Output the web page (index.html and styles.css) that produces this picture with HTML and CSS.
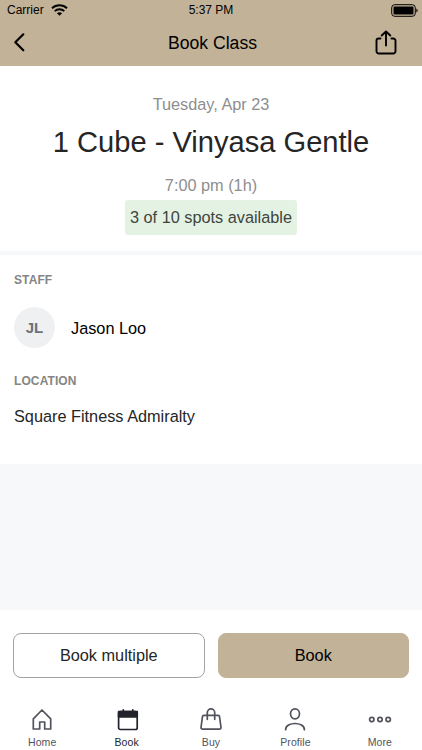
FILE: index.html
```html
<!DOCTYPE html>
<html lang="en">
<head>
    <meta charset="UTF-8">
    <meta name="viewport" content="width=device-width, initial-scale=1.0">
    <title>Book Class</title>
    <link rel="stylesheet" href="styles.css">
</head>
<body>
    <header>
        <div class="status-bar">
            <div class="carrier">
                <span>Carrier</span>
                <svg width="17" height="12" viewBox="0 0 17 12" fill="none" stroke="#000" stroke-width="1.9">
                    <path d="M1 4.3C5.2.3 11.8.3 16 4.3"/>
                    <path d="M3.7 7.1c2.7-2.5 6.9-2.5 9.6 0"/>
                    <path d="M8.5 11.8L5.9 9.2c1.5-1.3 3.7-1.3 5.2 0z" fill="#000" stroke="none"/>
                </svg>
            </div>
            <span class="time">5:37 PM</span>
            <svg class="battery" width="27" height="13" viewBox="0 0 27 13">
                <rect x=".7" y=".7" width="23.6" height="11.6" rx="3" fill="none" stroke="#000" stroke-width="1"/>
                <rect x="2.5" y="2.5" width="20" height="8" rx="1"/>
                <path d="M25.4 4.5c1.6.7 1.6 3.3 0 4z"/>
            </svg>
        </div>
        <div class="nav-bar">
            <svg width="28" height="26" viewBox="0 0 28 26" fill="none" stroke="#000" stroke-width="2.2" stroke-linecap="round" stroke-linejoin="round">
                <path d="M9.300 4.300L1.300 12.300 9.300 20.300"/>
            </svg>
            <h1>Book Class</h1>
            <svg width="28" height="26" viewBox="0 0 28 26" fill="none" stroke="#000" stroke-width="1.9" stroke-linecap="round" stroke-linejoin="round">
                <path d="M8.500 8.500H6.800a2.300 2.300 0 0 0-2.300 2.300v10.400a2.300 2.300 0 0 0 2.300 2.300h14.400a2.300 2.300 0 0 0 2.300-2.300V10.800a2.300 2.300 0 0 0-2.300-2.300h-1.700"/>
                <path d="M14 15.500V1.500M9.700 5.500L14 1.500l4.300 4"/>
            </svg>
        </div>
    </header>

    <section class="summary">
        <p class="date">Tuesday, Apr 23</p>
        <h2>1 Cube - Vinyasa Gentle</h2>
        <p class="hours">7:00 pm (1h)</p>
        <span class="spots">3 of 10 spots available</span>
    </section>

    <section class="details">
        <h3>STAFF</h3>
        <div class="staff">
            <span class="avatar">JL</span>
            <span class="staff-name">Jason Loo</span>
        </div>
        <h3>LOCATION</h3>
        <p class="location">Square Fitness Admiralty</p>
    </section>

    <div class="actions">
        <button class="btn">Book multiple</button>
        <button class="btn btn-primary">Book</button>
    </div>

    <nav class="tabs">
        <a class="tab">
            <svg width="24" height="24" viewBox="0 0 24 24">
                <path d="M3.300 10.800L12 2l8.700 8.800V21H14.700v-7H9.700v7H3.300z"/>
            </svg>
            <span>Home</span>
        </a>
        <a class="tab active">
            <svg width="24" height="24" viewBox="0 0 24 24">
                <rect x="3.600" y="3.500" width="18.600" height="18" rx="1.800"/>
                <path d="M3.600 3.500h18.600v5.300H3.600z" fill="currentColor"/>
                <path d="M8.300 1.800v2M17.800 1.800v2"/>
            </svg>
            <span>Book</span>
        </a>
        <a class="tab">
            <svg width="24" height="24" viewBox="0 0 24 24">
                <path d="M5 7.300h14a1.500 1.500 0 0 1 1.500 1.200l1.500 11a1.600 1.600 0 0 1-1.600 1.700H3.600A1.600 1.600 0 0 1 2 19.500l1.500-11A1.500 1.500 0 0 1 5 7.300z"/>
                <path d="M8.300 11.300V4.600a3.700 3.700 0 0 1 7.400 0v6.700"/>
            </svg>
            <span>Buy</span>
        </a>
        <a class="tab">
            <svg width="24" height="24" viewBox="0 0 24 24">
                <ellipse cx="12" cy="5.800" rx="4.500" ry="5"/>
                <path d="M2.600 21.700c0-8.300 18.800-8.300 18.800 0"/>
            </svg>
            <span>Profile</span>
        </a>
        <a class="tab">
            <svg width="24" height="24" viewBox="0 0 24 24">
                <circle cx="3.800" cy="11.500" r="2.200"/>
                <circle cx="12" cy="11.500" r="2.200"/>
                <circle cx="20.200" cy="11.500" r="2.200"/>
            </svg>
            <span>More</span>
        </a>
    </nav>
</body>
</html>
```

FILE: styles.css
```css
* {
    box-sizing: border-box;
}

body {
    display: flex;
    flex-direction: column;
    height: 750px;
    margin: 0;
    background-color: #f7f8fa;
    color: #252525;
    font-family: "Liberation Sans", Arial, sans-serif;
    overflow: hidden;
}

h1, h2, h3, p {
    margin: 0;
    font-weight: normal;
}

svg {
    display: block;
    flex: none;
    overflow: visible;
}

header {
    height: 66px;
    background-color: #c2b298;
    color: #000;
}

.status-bar {
    display: grid;
    grid-template-columns: 1fr auto 1fr;
    align-items: center;
    height: 20px;
    padding: 0 4px 0 7px;
    font-size: 12px;
    line-height: 20px;
}

.carrier {
    display: flex;
    align-items: center;
    gap: 7px;
}

.time {
    padding-right: 3px;
}

.battery {
    justify-self: end;
}

.nav-bar {
    display: grid;
    grid-template-columns: 28px 1fr 28px;
    align-items: center;
    height: 46px;
    padding: 0 22px 0 14px;
    text-align: center;
}

h1 {
    padding-left: 11px;
    font-size: 17.6px;
    line-height: 46px;
}

.summary {
    height: 185px;
    padding-top: 28px;
    background-color: #fff;
    text-align: center;
}

.date, .hours {
    color: #8e8e8e;
    font-size: 16.3px;
    line-height: 20px;
}

h2 {
    margin: 10px 0 15px;
    font-size: 29.1px;
    line-height: 36px;
}

.spots {
    display: inline-block;
    height: 35px;
    margin-top: 5px;
    padding: 0 5px;
    border-radius: 3px;
    background-color: #e4f2e4;
    color: #3e453e;
    font-size: 16.3px;
    line-height: 35px;
}

.details {
    height: 209px;
    margin-top: 4px;
    padding: 17px 14px 0;
    background-color: #fff;
}

h3 {
    color: #858585;
    font-size: 12px;
    font-weight: bold;
    letter-spacing: 0.1px;
    line-height: 16px;
}

.staff {
    display: flex;
    align-items: center;
    gap: 16px;
    margin: 19px 0 25px;
    color: #000;
    font-size: 16.3px;
    line-height: 20px;
}

.avatar {
    width: 41px;
    height: 41px;
    border-radius: 50%;
    background-color: #eff0f2;
    color: #6d7078;
    font-size: 15px;
    font-weight: bold;
    line-height: 41px;
    text-align: center;
}

.location {
    margin-top: 17px;
    font-size: 16.3px;
    line-height: 20px;
}

.actions {
    display: flex;
    gap: 13px;
    height: 89px;
    margin-top: auto;
    padding: 23px 13px 21px;
    background-color: #fff;
}

.btn {
    flex: 1;
    border: 1px solid #a3a3a3;
    border-radius: 8px;
    background-color: #fff;
    color: #252525;
    font-family: inherit;
    font-size: 16.3px;
    cursor: pointer;
}

.btn-primary {
    border-color: #c2b298;
    background-color: #c2b298;
    color: #000;
}

.tabs {
    display: flex;
    height: 51px;
    background-color: #fff;
}

.tab {
    display: flex;
    flex: 1;
    flex-direction: column;
    align-items: center;
    padding-top: 9px;
    color: #51535c;
    font-size: 10.5px;
    line-height: 14px;
    letter-spacing: 0.1px;
}

.tab svg {
    margin-bottom: 3px;
    fill: none;
    stroke: currentColor;
    stroke-width: 1.7;
    stroke-linejoin: round;
    stroke-linecap: round;
}

.tab.active {
    color: #22232b;
}
```
